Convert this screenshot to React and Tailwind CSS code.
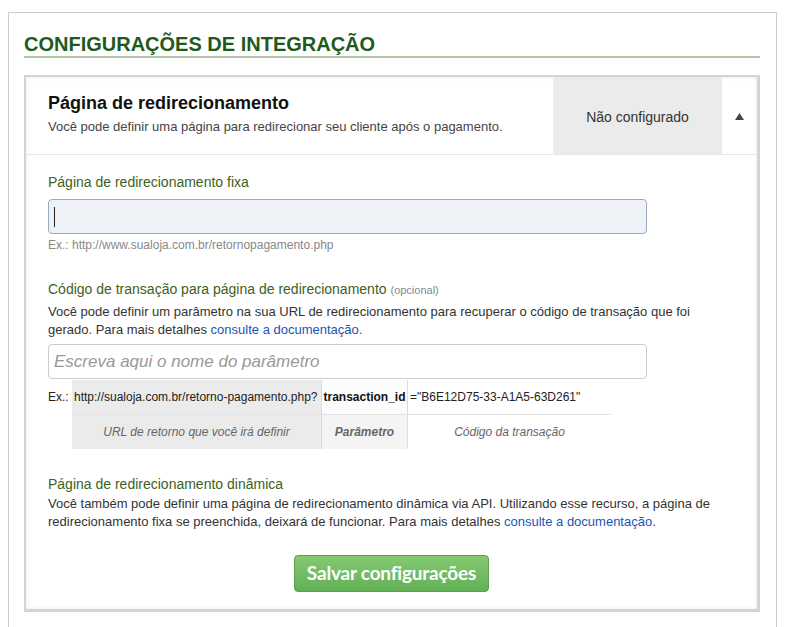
import React from 'react';

const font = { fontFamily: '"Liberation Sans", Arial, sans-serif' };

function Header() {
  return (
    <div className="flex border-b border-[#e6e6e6]">
      <div className="flex-1 pl-[22px] pt-[15px] pb-[18px]">
        <h2 className="text-[18px] leading-[22px] font-bold text-[#111]">Página de redirecionamento</h2>
        <p className="mt-1 text-[13px] leading-[18px] text-[#444]">
          Você pode definir uma página para redirecionar seu cliente após o pagamento.
        </p>
      </div>
      <div className="w-[169px] bg-[#ebebeb] flex items-center justify-center pt-[4px] text-[14px] text-[#333]">
        Não configurado
      </div>
      <div className="w-[35px] flex items-center justify-center pt-[2px]">
        <svg width="9" height="7" viewBox="0 0 9 7">
          <polygon points="4.5,0 9,7 0,7" fill="#444" />
        </svg>
      </div>
    </div>
  );
}

function ExampleTable() {
  return (
    <div className="mt-[1px] flex text-[12px] text-[#222]">
      <div className="w-[24px] h-[34px] flex items-center">Ex.:</div>
      <div className="flex flex-col">
        <div className="flex h-[34px]">
          <div className="w-[249px] bg-[#ebebeb] flex items-center pl-[2px]">
            http://sualoja.com.br/retorno-pagamento.php?
          </div>
          <div className="w-[87px] border-l border-r border-[#dcdcdc] bg-[#fcfcfc] flex items-center justify-center font-bold text-[#111]">
            transaction_id
          </div>
          <div className="w-[203px] flex items-center pl-[2px]">="B6E12D75-33-A1A5-63D261"</div>
        </div>
        <div className="flex h-[35px] border-t border-[#e3e3e3] italic text-[#666]">
          <div className="w-[249px] bg-[#ebebeb] flex items-center justify-center">
            URL de retorno que você irá definir
          </div>
          <div className="w-[87px] border-l border-r border-[#dcdcdc] bg-[#f4f4f4] flex items-center justify-center font-bold">
            Parâmetro
          </div>
          <div className="w-[203px] flex items-center justify-center">Código da transação</div>
        </div>
      </div>
    </div>
  );
}

export default function App() {
  return (
    <div className="bg-white min-h-[627px]" style={font}>
      <div className="ml-2 mt-3 w-[769px] min-h-[620px] border border-b-0 border-[#cccccc] pl-[15px] pr-[16px]">
        <h1 className="pt-[19px] text-[20px] leading-[24px] font-bold text-[#1f5a1b] border-b-2 border-[#b3c6a8]">
          CONFIGURAÇÕES DE INTEGRAÇÃO
        </h1>

        <div className="mt-[17px] border-2 border-r-[3px] border-b-[3px] border-[#d4d4d4] shadow-[inset_0_0_4px_rgba(0,0,0,0.08)]">
          <Header />

          <div className="pl-[22px] pr-[22px] pt-[17px] pb-[17px]">
            <label className="block text-[14px] leading-[20px] text-[#3e6123]">
              Página de redirecionamento fixa
            </label>
            <div className="mt-[7px] w-[599px] h-[35px] rounded-[4px] border border-[#98abc3] bg-[#eef1f5] flex items-center pl-[5px]">
              <span className="block w-px h-[20px] bg-[#222]" />
            </div>
            <p className="mt-[3px] text-[12px] leading-[16px] text-[#888]">
              Ex.: http://www.sualoja.com.br/retornopagamento.php
            </p>

            <label className="block mt-[26px] text-[14px] leading-[20px] text-[#3e6123]">
              Código de transação para página de redirecionamento{' '}
              <span className="text-[11px] text-[#7a8a99]">(opcional)</span>
            </label>
            <p className="mt-[3px] text-[13px] leading-[18px] text-[#333]">
              Você pode definir um parâmetro na sua URL de redirecionamento para recuperar o código de transação que foi
              gerado. Para mais detalhes <a className="text-[#1a55b5]">consulte a documentação.</a>
            </p>
            <div className="mt-[5px] w-[599px] h-[35px] rounded-[4px] border border-[#cccccc] bg-white flex items-center pl-[5px] text-[17px] italic text-[#999]">
              Escreva aqui o nome do parâmetro
            </div>

            <ExampleTable />

            <label className="block mt-[25px] text-[14px] leading-[20px] text-[#3e6123]">
              Página de redirecionamento dinâmica
            </label>
            <p className="mt-px text-[13px] leading-[18px] text-[#333]">
              Você também pode definir uma página de redirecionamento dinâmica via API. Utilizando esse recurso, a página de
              redirecionamento fixa se preenchida, deixará de funcionar. Para mais detalhes{' '}
              <a className="text-[#1a55b5]">consulte a documentação</a>.
            </p>

            <div className="mt-[24px] flex justify-center">
              <button
                className="w-[195px] h-[37px] rounded-[4px] border border-[#5b9e4e] bg-gradient-to-b from-[#84ca73] to-[#62b055] text-white text-[19px] font-bold tracking-[-0.2px]"
                style={{ fontFamily: 'Lato, "Open Sans", sans-serif' }}
              >
                Salvar configurações
              </button>
            </div>
          </div>
        </div>
      </div>
    </div>
  );
}
